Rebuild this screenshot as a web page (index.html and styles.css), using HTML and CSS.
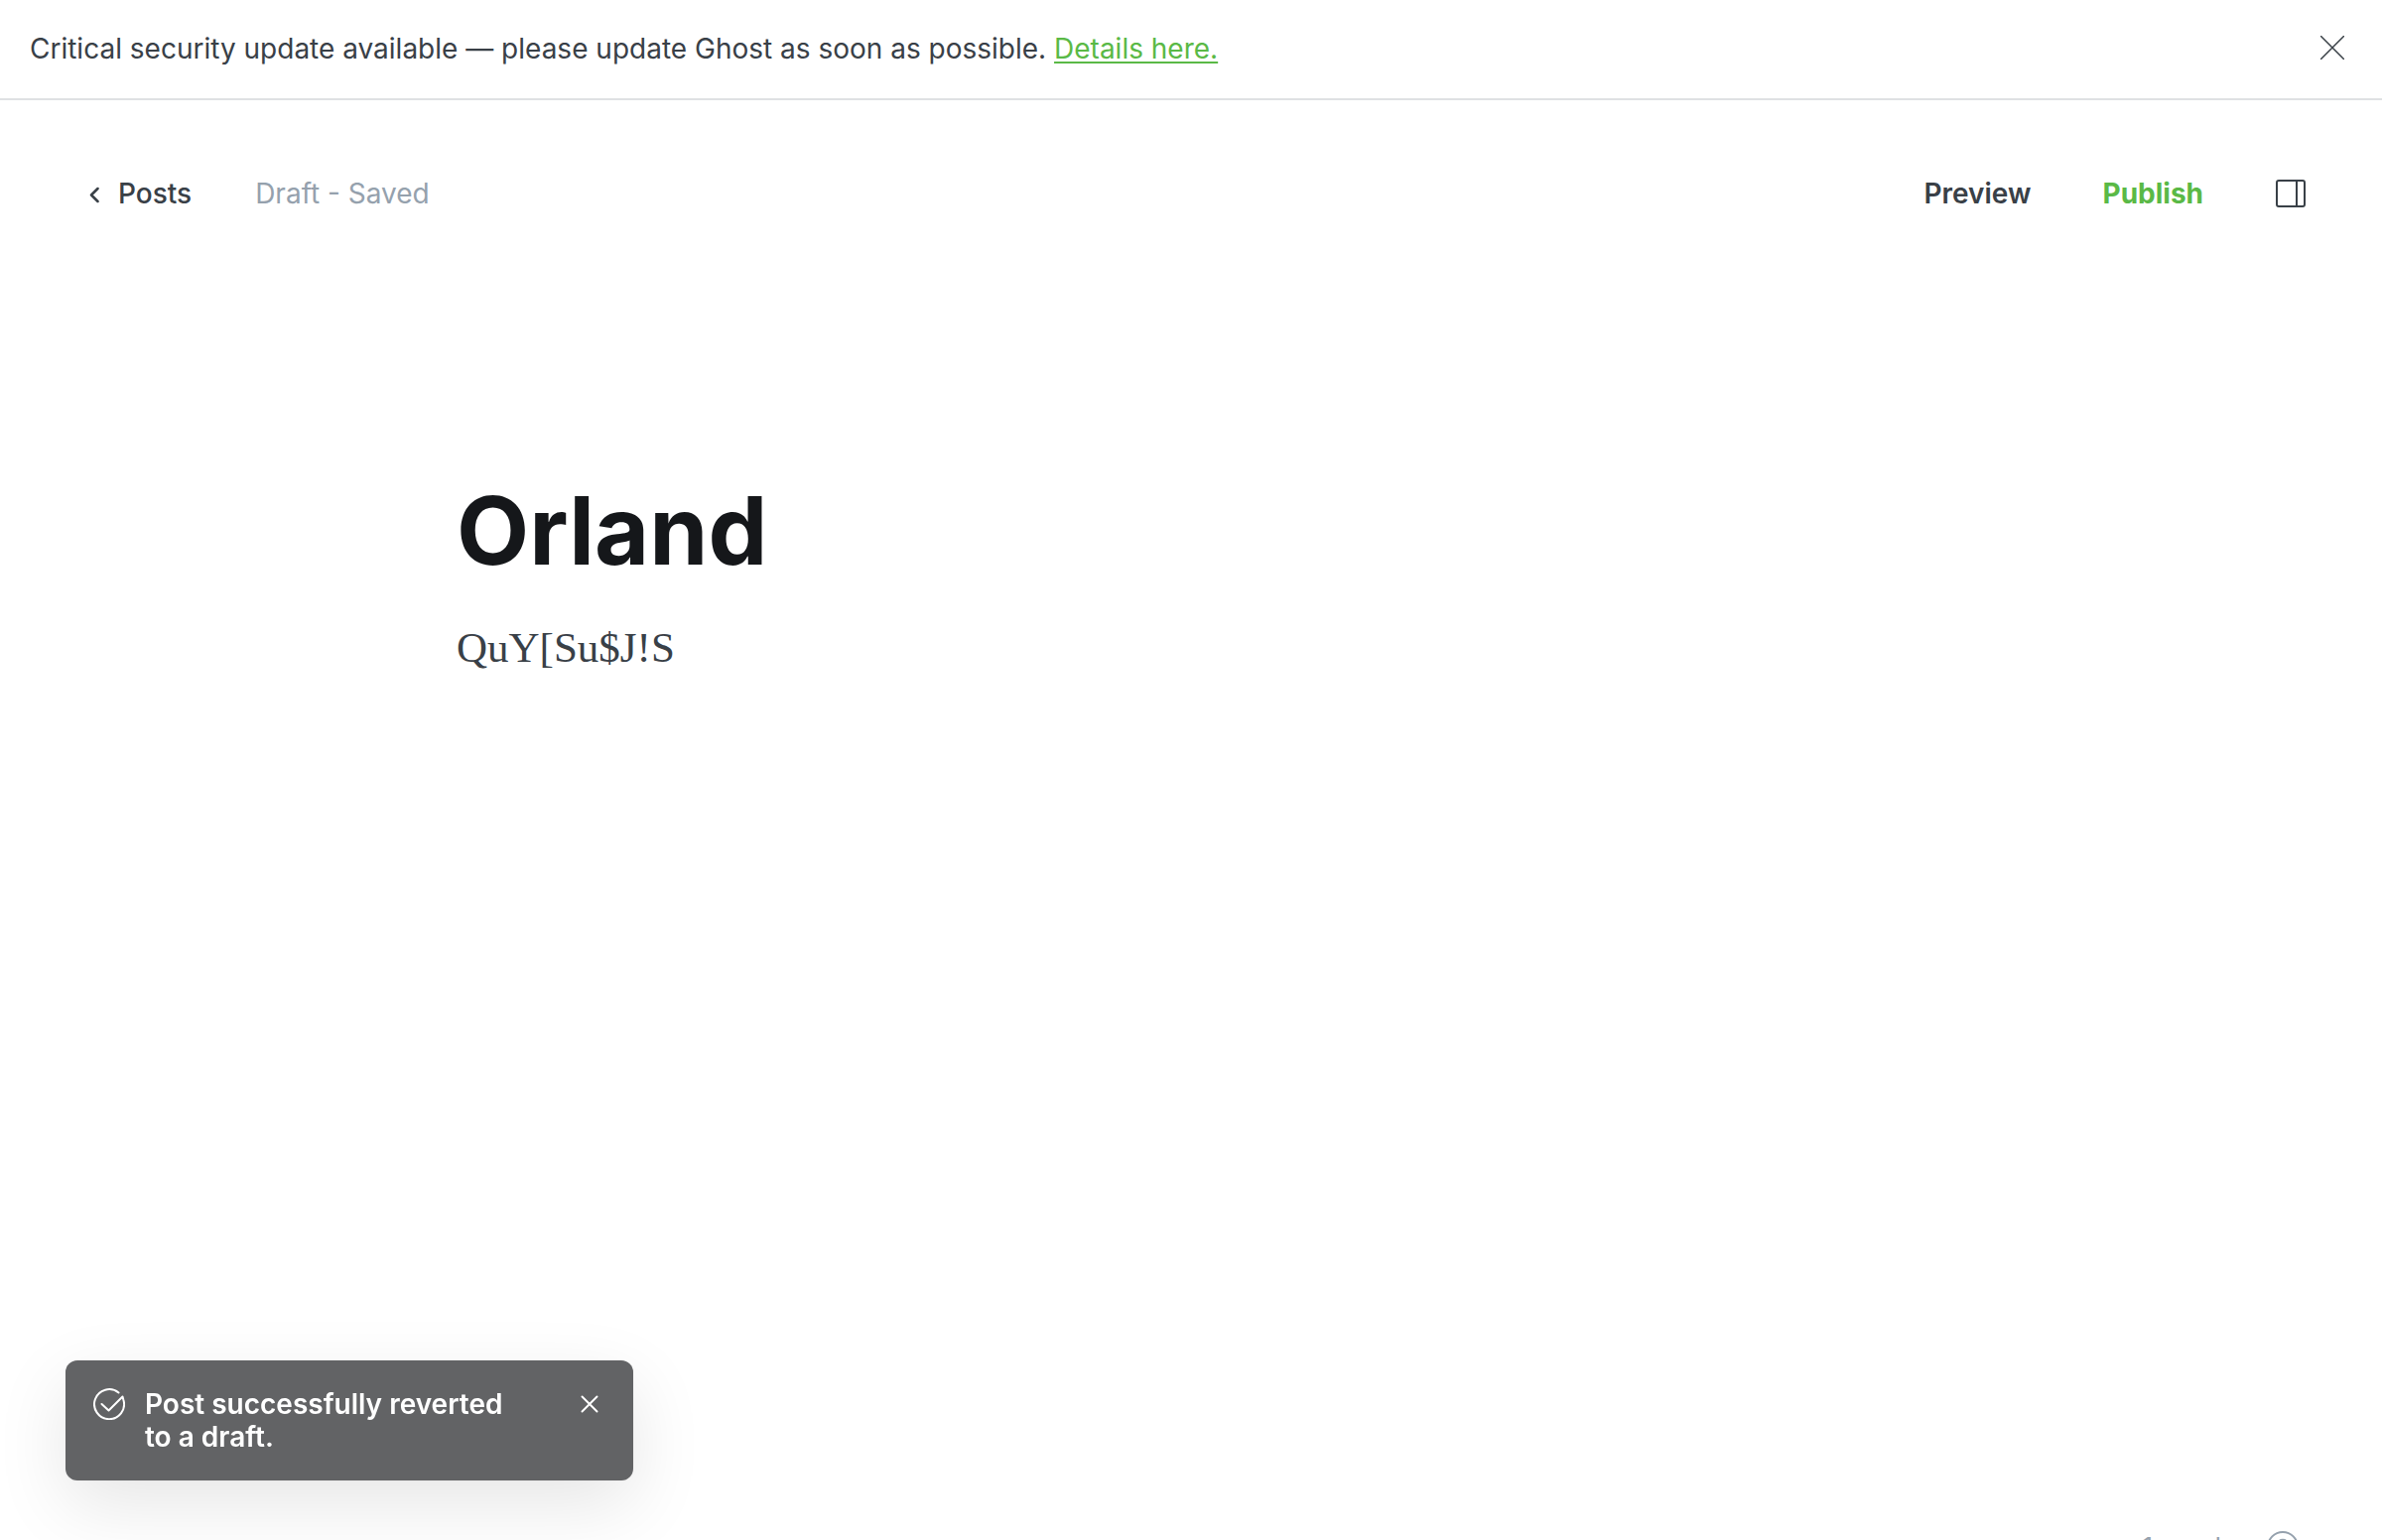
FILE: index.html
```html
<!DOCTYPE html>
<html lang="en">
<head>
<meta charset="utf-8">
<title>Orland</title>
<link rel="stylesheet" href="styles.css">
</head>
<body>
<aside class="banner">
  <p class="banner-text">Critical security update available — please update Ghost as soon as possible. <a class="banner-link" href="#">Details here.</a></p>
  <button class="icon-button" type="button" aria-label="Dismiss">
    <svg width="24" height="24" viewBox="0 0 24 24"><path d="M0.5 0.5l23 23M23.5 0.5l-23 23"/></svg>
  </button>
</aside>
<main class="editor">
  <header class="toolbar">
    <a class="back" href="#">
      <svg width="10" height="20" viewBox="0 0 10 20"><path d="M8.500 5L2 11.500 8.500 18"/></svg>
      Posts
    </a>
    <span class="status">Draft - Saved</span>
    <div class="actions">
      <button class="action" type="button">Preview</button>
      <button class="action publish" type="button">Publish</button>
      <button class="icon-button" type="button" aria-label="Settings">
        <svg class="panel-icon" width="32" height="30" viewBox="0 0 32 30"><rect x="2" y="2" width="28" height="26" rx="2"/><path d="M22 2v26"/></svg>
      </button>
    </div>
  </header>
  <article class="post">
    <h1 class="title">Orland</h1>
    <p class="body-text">QuY[Su$J!S</p>
  </article>
  <footer class="footer">
    <span>1 word</span>
    <a class="help" href="#" aria-label="Help">
      <svg width="32" height="32" viewBox="0 0 32 32"><circle cx="16" cy="16" r="15"/><path d="M12 12.500c0-5 8-5 8 0 0 3-4 3-4 6.500M16 22v2"/></svg>
    </a>
  </footer>
</main>
<div class="toast" role="status">
  <svg class="toast-icon" width="32" height="32" viewBox="0 0 32 32"><path d="M25.500 4.500A15 15 0 1 0 30.300 11.500L29.500 8.500 15.500 22.500 8.500 16"/></svg>
  <p class="toast-text">Post successfully reverted to a draft.</p>
  <button class="icon-button toast-close" type="button" aria-label="Close">
    <svg width="18" height="18" viewBox="0 0 18 18"><path d="M1.500 1.500l15 15M16.500 1.500l-15 15"/></svg>
  </button>
</div>
</body>
</html>
```
FILE: styles.css
```css
* {
  box-sizing: border-box;
}

body {
  margin: 0;
  height: 100vh;
  overflow: hidden;
  background: #fff;
  color: #394047;
  font: 28px/40px Inter, sans-serif;
}

p,
h1 {
  margin: 0;
}

button {
  padding: 0;
  border: 0;
  background: none;
  color: inherit;
  font: inherit;
}

a {
  color: inherit;
  text-decoration: none;
}

svg {
  display: block;
  flex: none;
  fill: none;
  stroke: currentColor;
  stroke-width: 2;
  stroke-linecap: round;
  stroke-linejoin: round;
}

.banner {
  display: flex;
  align-items: flex-start;
  justify-content: space-between;
  padding: 29px 38px 30px 30px;
  border-bottom: 2px solid #dfe1e3;
}

.banner .icon-button {
  padding-top: 7px;
}

.banner svg {
  stroke-width: 1.5;
}

.banner-link {
  color: #5ab946;
  text-decoration: underline;
  text-decoration-thickness: 2px;
  text-underline-offset: 3px;
}

.editor {
  display: flex;
  flex-direction: column;
  height: 100vh;
}

.toolbar {
  display: flex;
  align-items: center;
  padding: 74px 76px 0 90px;
}

.back {
  display: flex;
  align-items: center;
  gap: 19px;
  font-weight: 500;
}

.back svg {
  stroke-width: 2.5;
}

.status {
  margin-left: 64px;
  color: #95a1ad;
}

.actions {
  display: flex;
  align-items: center;
  gap: 72px;
  margin-left: auto;
}

.action {
  font-weight: 600;
}

.publish {
  color: #5ab946;
  font-weight: 700;
}

.post {
  flex: 1;
  width: 1480px;
  max-width: 100%;
  margin: 0 auto;
  padding-top: 260px;
}

.title {
  color: #15171a;
  font-size: 95px;
  line-height: 120px;
  font-weight: 700;
}

.body-text {
  margin-top: 26px;
  font: 43px/64px "Liberation Serif", serif;
}

.footer {
  display: flex;
  align-items: center;
  justify-content: flex-end;
  gap: 46px;
  padding: 0 84px 78px;
  color: #95a1ad;
  font-size: 26px;
  line-height: 32px;
}

.toast {
  position: fixed;
  left: 66px;
  bottom: 60px;
  display: flex;
  align-items: flex-start;
  width: 572px;
  padding: 28px 35px 27px 28px;
  border-radius: 12px;
  background: #626365;
  color: #fff;
  font-weight: 600;
  line-height: 33px;
  box-shadow: 0 0 2px rgba(0, 0, 0, 0.08), 0 24px 72px rgba(0, 0, 0, 0.1);
}

.toast-text {
  flex: 1;
  margin: 0 56px 0 20px;
}

.toast-close {
  padding-top: 7px;
}
```
